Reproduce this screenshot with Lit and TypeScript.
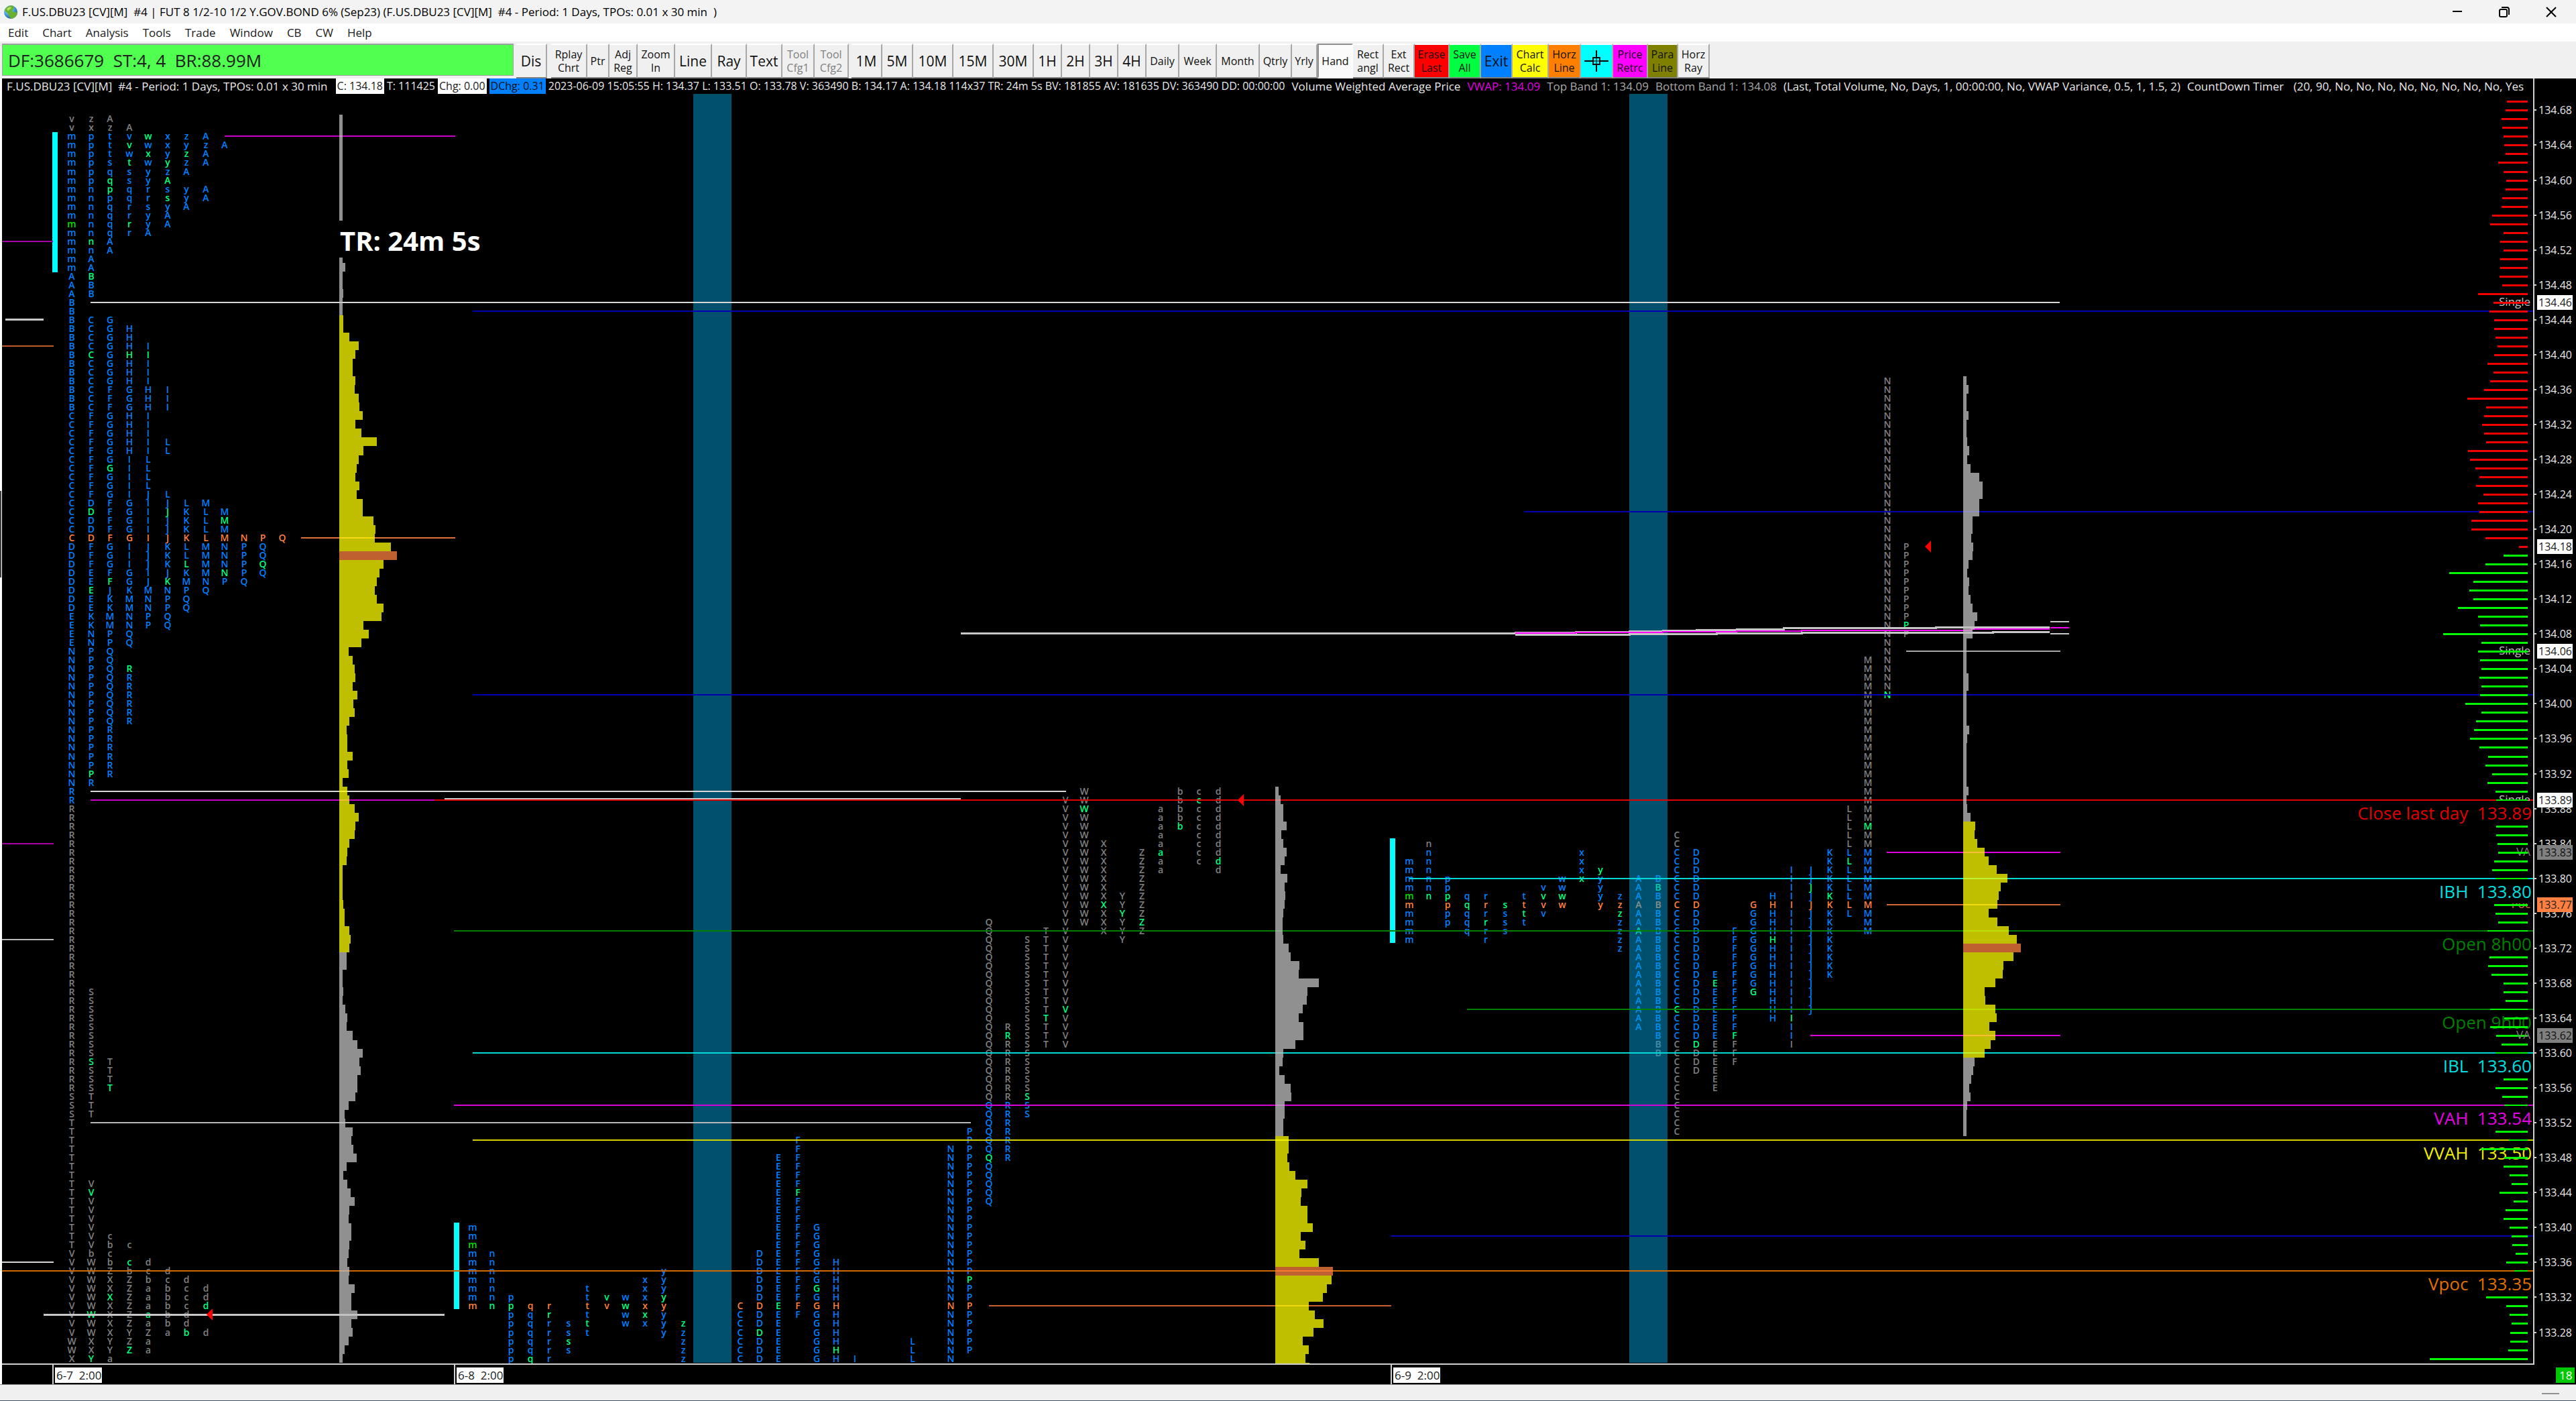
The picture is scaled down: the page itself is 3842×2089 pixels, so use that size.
import { LitElement, html, svg, css, nothing } from "lit";
import { customElement } from "lit/decorators.js";

/* ---------- price scale ---------- */
const TOP_PRICE = 134.68;
const TICK = 13.015;
/** Vertical centre of a tick row inside the plot; rows count down from 134.68. */
const rowY = (k: number) => Math.round(24.4 + TICK * k);
const AXIS_SHIFT = 23;

const COLORS = {
  grey: "#808080",
  blue: "#0080ff",
  green: "#00ff80",
  open: "#00e000",
  orange: "#ff8040",
};

/* ---------- letters ---------- */
/** Folded profile of 6-7. "*" marks a closing print, "!" the opening one. */
const FOLDED: string[] = [
  "vzA", "vxzA", "mptv*wxzA", "mpt*vwxyzA", "mptw*xy*zA", "mps*tw*yzA", "mpqsyzA", "mp*qsy*A",
  "mn*pqrsyA", "mnpqr*syA", "mnqrsyA", "mnqryA", "!mnq*ryA", "mnqrA", "m*nA", "mnA", "mA", "mA",
  "A*B", "AB", "AB", "B", "B", "BCG", "BCGH", "BCGH", "BCGHI", "B*CG*H*I", "BCGHI", "BCGHI", "BCGHI",
  "BCFGHI", "BCFGHI", "BCFGHI", "CFGHI", "CFGHI", "CFGHI", "CFGHIL", "CFGHIL", "CFGIL", "CF*GIL",
  "CFGIL", "CFGIL", "CFGIJL", "CDFGIJLM", "C*DFGI*JKLM", "CDFGIJKL*M", "CDFGIJKLM", "CDFGIJKLMNPQ",
  "DFGIJKLMNPQ", "DFGIJKLMNPQ", "DFGIJK*LMNP*Q", "DEFGIJKM*NPQ", "DE*FGJ*KMNPQ", "D*EJKMNPQ",
  "DEKMNPQ", "DEKMNPQ", "EKMNPQ", "EKMNPQ", "ENPQ", "ENPQ", "NPQ", "NPQ", "NPQ*R", "NPQR", "NPQR",
  "NPQR", "NPQR", "NPQR", "NPQR", "NPR", "NPR", "NPR", "NPR", "NPR", "N*PR", "NR", "R", "R",
  ...Array(21).fill("R"),
  ...Array(8).fill("RS"),
  "R*ST", "RST", "RST", "RS*T", "ST", "ST", "ST",
  ...Array(7).fill("T"),
  "TV", "T*V", "TV", "TV", "TV", "TV", "TVc", "TVbc", "Vbc", "VWb*cd", "VWZbcd", "VWXZbcd",
  "VWXZabcd", "VW*XZabcd", "VWXZabc*d", "V*WXZ*abd", "VWXZabd", "VWXYZa*bd", "WXYZa", "WXY*Za", "X*Ya",
];

const PERIODS = "mnpqrstvwxyzABCDEFGHIJKLMNPQRSTVWXYZabcd";
/** letter, first row, last row, row of the closing print */
type Period = [string, number, number, number?];

const DAY8: Period[] = [
  ["m", 128, 137], ["n", 131, 137, 137], ["p", 136, 143, 137], ["q", 137, 143, 143], ["r", 137, 143, 138],
  ["s", 139, 142, 141], ["t", 135, 140, 139], ["v", 136, 137, 136], ["w", 136, 139, 137],
  ["x", 134, 139, 138], ["y", 133, 140, 136], ["z", 139, 143, 139], ["C", 137, 143], ["D", 131, 143, 140],
  ["E", 120, 143, 137], ["F", 118, 138, 124], ["G", 128, 143, 135], ["H", 132, 143, 142], ["I", 143, 143],
  ["L", 141, 143], ["N", 119, 143], ["P", 117, 142, 134], ["Q", 93, 125, 120], ["R", 105, 120, 106],
  ["S", 95, 115, 113], ["T", 94, 107, 104], ["V", 79, 107, 103], ["W", 78, 93, 80], ["X", 84, 94, 91],
  ["Y", 90, 95, 92], ["Z", 85, 94, 93], ["a", 80, 87, 85], ["b", 78, 82, 82], ["c", 78, 86, 79],
  ["d", 78, 87, 86],
];
const DAY9: Period[] = [
  ["m", 86, 95], ["n", 84, 90, 90], ["p", 88, 93, 90], ["q", 90, 94, 91], ["r", 90, 95, 93],
  ["s", 91, 94, 91], ["t", 90, 93, 92], ["v", 89, 92, 90], ["w", 88, 91, 90], ["x", 85, 88, 88],
  ["y", 87, 91, 87], ["z", 90, 96, 92], ["A", 88, 105, 94], ["B", 88, 108, 89], ["C", 83, 117, 103],
  ["D", 85, 110, 107], ["E", 99, 112, 100], ["F", 94, 109, 106], ["G", 91, 101, 101], ["H", 90, 104, 95],
  ["I", 87, 107, 104], ["J", 87, 103, 89], ["K", 85, 99, 90], ["L", 80, 92, 86], ["M", 63, 94, 82],
  ["N", 31, 67, 67], ["P", 50, 60, 59],
];

interface Profile {
  x: number;
  poc: number;
  vah: number;
  val: number;
  openRow: number;
}
const P7: Profile = { x: 107, poc: 49, vah: 3, val: 79, openRow: 13 };
const P8: Profile = { x: 705, poc: 137, vah: 114, val: 200, openRow: 130 };
const P9: Profile = { x: 2102, poc: 91, vah: 85, val: 106, openRow: 90 };
const COL = 28.5;

/* ---------- volume at price ---------- */
interface Volume {
  x: number;
  from: number;
  vah: number;
  val: number;
  poc: number;
  units: number[];
}
const rep = (n: number, v: number): number[] => Array(n).fill(v);
const VOLUMES: Volume[] = [
  {
    x: 506, from: 1, vah: 24, val: 96, poc: 51,
    units: [
      ...rep(17, 3), 6, 3, 3, 4, 3, 3, 4, 4, 10, 19, 16, 13, 13, 16, 15, 19, 20, 23, 16, 22, 37, 24, 19, 17,
      16, 20, 17, 23, 23, 34, 36, 35, 51, 57, 44, 40, 37, 35, 37, 44, 42, 24, 29, 22, 9, 13, 15, 16, 13, 18,
      14, 15, 10, 7, 8, 8, 13, 8, 9, 3, 8, 10, 15, 19, 16, 15, 10, 8, 7, 3, 3, 3, 3, 4, 5, 5, 10, 11, 10, 7,
      7, 3, 3, 4, 3, 6, 8, 7, 13, 18, 23, 20, 21, 18, 18, 16, 9, 5, 6, 13, 12, 14, 17, 7, 4, 8, 11, 15, 10,
      9, 12, 12, 10, 9, 8, 10, 9, 15, 12, 12, 18, 12, 13, 9, 5, 3,
    ],
  },
  {
    x: 1902, from: 78, vah: 118, val: 200, poc: 133,
    units: [
      3, 5, 8, 8, 11, 6, 8, 11, 9, 5, 12, 9, 10, 9, 8, 7, 7, 8, 13, 15, 24, 23, 43, 32, 31, 27, 23, 28, 28,
      20, 8, 7, 4, 9, 15, 16, 9, 9, 8, 8, 13, 13, 12, 14, 20, 32, 26, 25, 32, 32, 37, 25, 30, 24, 43, 57,
      56, 51, 47, 33, 39, 48, 38, 27, 33, 30, 34,
    ],
  },
  {
    x: 2928, from: 31, vah: 82, val: 108, poc: 96,
    units: [
      3, 5, 3, 3, 5, 3, 3, 4, 6, 4, 7, 16, 19, 19, 16, 16, 9, 9, 8, 10, 9, 5, 4, 6, 5, 7, 9, 14, 11, 9, 3, 3,
      3, 3, 5, 5, 3, 3, 3, 3, 6, 4, 3, 3, 3, 3, 3, 5, 3, 4, 7, 12, 11, 14, 21, 25, 33, 44, 37, 35, 34, 25,
      34, 45, 53, 57, 50, 40, 39, 32, 21, 22, 32, 33, 26, 32, 27, 21, 11, 10, 8, 6, 7, 4, 3, 3, 3,
    ],
  },
];

/* ---------- market depth, one bar per tick from 134.69 ---------- */
const DEPTH: number[] = [
  31, 33, 39, 38, 36, 35, 33, 44, 36, 32, 33, 38, 39, 53, 56, 36, 41, 36, 41, 41, 42, 38, 74, 51, 57, 50,
  50, 48, 45, 50, 60, 51, 56, 65, 90, 62, 65, 68, 65, 62, 89, 86, 78, 72, 77, 66, 74, 72, 84, 84, 63, 13,
  36, 63, 117, 81, 87, 81, 104, 74, 71, 126, 69, 74, 71, 69, 72, 69, 71, 93, 69, 77, 80, 86, 72, 59, 63,
  53, 60, 48, 47, 0, 0, 47, 47, 45, 44, 50, 53, 48, 0, 0, 50, 48, 44, 60, 0, 0, 57, 59, 54, 36, 36, 33,
  56, 35, 56, 47, 39, 48, 0, 0, 36, 48, 38, 35, 0, 0, 48, 28, 70, 35, 36, 27, 24, 42, 21, 33, 36, 27, 24,
  23, 18, 32, 20, 0, 0, 62, 32, 27, 24, 26, 26, 29, 146,
];

/* ---------- horizontal lines ---------- */
/** row, start, end (null runs to the right edge), colour */
type Level = [number, number, number | null, string];

const PROFILE_LINES: Level[] = [
  [15, 0, 79, "#a800a8"], [3, 335, 679, "#c800c8"], [22, 135, 3072, "#d8d8d8"], [27, 0, 80, "#c05828"],
  [49, 449, 679, "#e07038"], [78, 135, 1590, "#d8d8d8"], [79, 135, 648, "#c800c8"], [84, 0, 80, "#a800a8"],
  [95, 0, 80, "#b8b8b8"], [132, 0, 80, "#d8d8d8"], [116, 135, 1448, "#b8b8b8"], [137, 1475, 2075, "#c86030"],
  [106, 2700, 3073, "#e000e0"], [85, 2814, 3073, "#e000e0"], [91, 2814, 3073, "#d06838"],
  [62, 2843, 3073, "#a8a8a8"],
];
const CHART_LINES: Level[] = [
  [23, 705, null, "#0000b0"], [46, 2273, null, "#0000b0"], [67, 705, null, "#0000b0"],
  [129, 2074, null, "#0000b0"], [79, 648, null, "#e00000"], [94, 677, null, "#008000"],
  [103, 2188, null, "#008000"], [88, 2102, null, "#00d8d8"], [108, 705, null, "#00d8d8"],
  [114, 677, null, "#d800d8"], [118, 705, null, "#d0d000"], [133, 0, null, "#d06800"],
];
const LABELS: [number, string, string][] = [
  [79, "Close last day\u00a0 133.89", "#e00000"], [88, "IBH\u00a0 133.80", "#00e0e0"], [94, "Open 8h00", "#008000"],
  [103, "Open 9h00", "#008000"], [108, "IBL\u00a0 133.60", "#00e0e0"], [114, "VAH\u00a0 133.54", "#e800e8"],
  [118, "VVAH\u00a0 133.50", "#f0f000"], [133, "Vpoc\u00a0 133.35", "#e07000"],
];
const STUDY_LABELS: [number, string, string][] = [
  [22, "Single", "#c0c0c0"], [62, "Single", "#c0c0c0"], [79, "Single", "#c0c0c0"], [85, "VA", "#808080"],
  [91, "Poc", "#e07038"],
];
const MARKS: [number, string, string][] = [
  [22, "#ffffff", "#202020"], [50, "#ffffff", "#202020"], [62, "#ffffff", "#202020"],
  [79, "#ffffff", "#202020"], [85, "#808080", "#101010"], [91, "#ff8040", "#202020"],
  [106, "#808080", "#101010"],
];

/* ---------- toolbar ---------- */
interface Tool {
  t: string[];
  w: number;
  big?: boolean;
  bg?: string;
  off?: boolean;
  on?: boolean;
  gap?: number;
  cross?: boolean;
}
const TOOLS: Tool[] = [
  { t: ["Dis"], w: 46, big: true, gap: 4 },
  { t: ["Rplay", "Chrt"], w: 54, gap: 6 }, { t: ["Ptr"], w: 33 }, { t: ["Adj", "Reg"], w: 42 },
  { t: ["Zoom", "In"], w: 56 }, { t: ["Line"], w: 55, big: true }, { t: ["Ray"], w: 52, big: true },
  { t: ["Text"], w: 53, big: true }, { t: ["Tool", "Cfg1"], w: 48, off: true },
  { t: ["Tool", "Cfg2"], w: 51, off: true },
  { t: ["1M"], w: 46, big: true, gap: 4 }, { t: ["5M"], w: 46, big: true }, { t: ["10M"], w: 60, big: true },
  { t: ["15M"], w: 60, big: true }, { t: ["30M"], w: 60, big: true }, { t: ["1H"], w: 42, big: true },
  { t: ["2H"], w: 42, big: true }, { t: ["3H"], w: 42, big: true }, { t: ["4H"], w: 42, big: true },
  { t: ["Daily"], w: 49 }, { t: ["Week"], w: 56 }, { t: ["Month"], w: 64 }, { t: ["Qtrly"], w: 48 },
  { t: ["Yrly"], w: 38 }, { t: ["Hand"], w: 53, on: true }, { t: ["Rect", "angl"], w: 46 },
  { t: ["Ext", "Rect"], w: 46 }, { t: ["Erase", "Last"], w: 52, bg: "#ff0000" },
  { t: ["Save", "All"], w: 47, bg: "#00ff40" }, { t: ["Exit"], w: 47, big: true, bg: "#0080ff" },
  { t: ["Chart", "Calc"], w: 54, bg: "#ffff00" }, { t: ["Horz", "Line"], w: 48, bg: "#ff8000" },
  { t: ["Crosshair"], w: 48, bg: "#00ffff", cross: true }, { t: ["Price", "Retrc"], w: 52, bg: "#ff00ff" },
  { t: ["Para", "Line"], w: 45, bg: "#808000" }, { t: ["Horz", "Ray"], w: 47 },
];
const MENU = ["Edit", "Chart", "Analysis", "Tools", "Trade", "Window", "CB", "CW", "Help"];
const DATES: [number, string][] = [[78, "6-7\u00a0 2:00"], [677, "6-8\u00a0 2:00"], [2074, "6-9\u00a0 2:00"]];

@customElement("title-strip")
class TitleStrip extends LitElement {
  static styles = css`
    :host { display: flex; align-items: center; height: 35px; background: #f3f3f3; padding-left: 5px;
      font: 17px "Open Sans", "Noto Sans", sans-serif; color: #000; }
    .globe { width: 22px; height: 24px; margin-right: 6px; }
    .name { flex: 1; margin: 0; font: inherit; white-space: pre; }
    .ctl { width: 70px; height: 34px; padding: 0; border: 0; background: none; display: grid; place-items: center; }
    .ctl svg { fill: none; stroke: #000; stroke-width: 2; }
    .ctl:last-child { margin-right: 2px; }
  `;
  render() {
    return html`
      <svg class="globe" viewBox="0 0 22 24">
        <defs>
          <radialGradient id="g" cx="35%" cy="30%" r="75%">
            <stop offset="0" stop-color="#e8f8ff" /><stop offset=".45" stop-color="#58b0e0" />
            <stop offset="1" stop-color="#1858a0" />
          </radialGradient>
        </defs>
        <circle cx="11" cy="12" r="10" fill="url(#g)" />
        <path d="M2 9C5 3 11 1 15 3C17 6 13 8 14 11C16 13 20 11 21 13C20 19 15 22 11 22C10 18 7 17 7 14C5 12 3 12 2 9Z" fill="#68b030" />
        <path d="M5 7C8 4 11 4 12 5C11 8 8 8 7 11Z" fill="#b8e060" />
      </svg>
      <h1 class="name">F.US.DBU23 [CV][M]  #4 | FUT 8 1/2-10 1/2 Y.GOV.BOND 6% (Sep23) (F.US.DBU23 [CV][M]  #4 - Period: 1 Days, TPOs: 0.01 x 30 min  )</h1>
      <button class="ctl" aria-label="Minimize"><svg width="16" height="16"><path d="M1 7H15" /></svg></button>
      <button class="ctl" aria-label="Restore"><svg width="16" height="16"><rect x="1" y="4" width="11" height="11" rx="2" /><path d="M4 1H12Q15 1 15 4V12" /></svg></button>
      <button class="ctl" aria-label="Close"><svg width="16" height="16"><path d="M1 1L15 15M15 1L1 15" /></svg></button>
    `;
  }
}

@customElement("tool-strip")
class ToolStrip extends LitElement {
  static styles = css`
    :host { display: block; font-family: "Open Sans", "Noto Sans", sans-serif; color: #202020; }
    .menu { display: flex; gap: 21px; height: 27px; padding: 0 12px; background: #fff; align-items: center; }
    .menu button { border: 0; padding: 0; background: none; font: 17px "Open Sans", sans-serif; color: #202020; }
    .bar { display: flex; height: 55px; background: #f0f0f0; padding: 3px 0 0 3px; box-sizing: border-box; }
    .state { box-sizing: border-box; width: 763px; height: 48px; line-height: 46px; padding-left: 8px; background: #50ff50;
      border: 1px solid #a0a0a0; border-top-width: 2px; font-size: 26px; white-space: pre; }
    .tool { box-sizing: border-box; height: 52px; padding: 0; border: 0; border-right: 2px solid #a8a8a8;
      border-top: 2px solid #fff; border-bottom: 2px solid #808080; background: #f0f0f0; font: 16px/20px "Open Sans", sans-serif; color: #101010;
      display: flex; flex-direction: column; align-items: center; justify-content: center; white-space: nowrap; }
    .big { font-size: 21px; line-height: 26px; }
    .tool:disabled { color: #808080; }
    .on { background: #fbfbfb; border-top-color: #909090; border-left: 2px solid #909090; border-right-color: #fff; border-bottom-color: #fff; }
    .on + .tool { border-left: 0; }
  `;
  render() {
    return html`
      <nav class="menu">${MENU.map((m) => html`<button>${m}</button>`)}</nav>
      <div class="bar">
        <output class="state">DF:3686679  ST:4, 4  BR:88.99M</output>
        ${TOOLS.map((t) => html`<button
          class="tool ${t.big ? "big" : ""} ${t.on ? "on" : ""}"
          ?disabled=${t.off}
          aria-label=${t.t.join(" ")}
          style="width:${t.w}px;${t.gap ? `margin-left:${t.gap}px;` : ""}${t.bg ? `background:${t.bg};` : ""}"
        >${t.cross
          ? html`<svg width="36" height="32" fill="none" stroke="#000" stroke-width="2"><path d="M0 16H36M18 0V32" /><rect x="13" y="11" width="10" height="10" fill="#00ffff" /><path d="M18 11V21M13 16H23" stroke-width="1" /></svg>`
          : t.t.map((s) => html`<span>${s}</span>`)}</button>`)}
      </div>
    `;
  }
}

@customElement("profile-chart")
class ProfileChart extends LitElement {
  static styles = css`
    :host { position: relative; display: grid; grid-template-columns: minmax(0, 1fr) 64px; grid-template-rows: minmax(0, 1fr) 29px;
      background: #000; border-bottom: 1px solid #909090; overflow: hidden; font-family: "Open Sans", "Noto Sans", sans-serif; color: #e8e8e8; }
    .edge { position: absolute; left: 0; top: 0; bottom: 0; width: 3px; background: #fff; }
    .notch { position: absolute; left: 0; top: 615px; width: 2px; height: 129px; background: #404040; }
    .plot { display: flex; flex-direction: column; min-width: 0; min-height: 0; border-bottom: 2px solid #d0d0d0; overflow: hidden; }
    .info { display: flex; height: 23px; line-height: 23px; padding-left: 10px; font-size: 17px; white-space: pre; overflow: hidden; }
    .info span { flex: none; margin-right: 4px; }
    .info .lead { margin-right: 12px; }
    .info .wide { margin-right: 10px; }
    .info .num { font-size: 16px; }
    .white { background: #fff; color: #202020; padding: 0 2px; }
    .azure { background: #0080ff; color: #101010; padding: 0 2px; }
    .vwap { color: #e000e0; }
    .dim { color: #a8a8a8; }
    .canvas { flex: 1; width: 100%; min-height: 0; display: block; }
    .nest { overflow: visible; }
    .axis { width: 100%; height: 100%; border-left: 2px solid #d0d0d0; box-sizing: border-box; display: block; }
    .axis text { font-size: 16px; fill: #e8e8e8; }
    .dates { grid-column: 1 / 3; width: 100%; height: 29px; display: block; }
    .dates text { font-size: 17px; fill: #202020; }
    .dates .count { fill: #fff; }
    .tpo { font-size: 14px; font-weight: 600; text-anchor: middle; }
    .label { font-size: 26px; text-anchor: end; }
    .study { font-size: 17px; text-anchor: end; }
    .timer { font-size: 40px; font-weight: 700; fill: #fff; }
  `;

  private letter(ch: string, x: number, k: number, fill: string) {
    return svg`<text x=${Math.round(x)} y=${rowY(k) + 5} fill=${fill}>${ch}</text>`;
  }

  private base(p: Profile, k: number) {
    if (k === p.poc) return COLORS.orange;
    return k >= p.vah && k <= p.val ? COLORS.blue : COLORS.grey;
  }

  private folded() {
    return FOLDED.map((row, i) => {
      const k = i + 1;
      const out: unknown[] = [];
      let col = 0;
      let fill = "";
      for (const ch of row) {
        if (ch === "*") fill = COLORS.green;
        else if (ch === "!") fill = COLORS.open;
        else {
          out.push(this.letter(ch, P7.x + COL * col, k, fill || this.base(P7, k)));
          col++;
          fill = "";
        }
      }
      return out;
    });
  }

  private split(p: Profile, periods: Period[]) {
    return periods.map(([ch, from, to, close]) => {
      const x = p.x + COL * PERIODS.indexOf(ch);
      const out: unknown[] = [];
      for (let k = from; k <= to; k++) {
        const fill = k === close ? COLORS.green : ch === "m" && k === p.openRow ? COLORS.open : this.base(p, k);
        out.push(this.letter(ch, x, k, fill));
      }
      return out;
    });
  }

  private volume(v: Volume) {
    return v.units.map((u, i) => {
      const k = v.from + i;
      const y = Math.round(17.9 + TICK * k);
      const h = Math.round(17.9 + TICK * (k + 1)) - y;
      const fill = k === v.poc ? "#ff8040" : k >= v.vah && k <= v.val ? "#ffff00" : "#c0c0c0";
      return svg`<rect x=${v.x} y=${y} width=${Math.round(u * 1.5)} height=${h} fill=${fill} />`;
    });
  }

  private level([k, x1, x2, color]: Level) {
    return svg`<line x1=${x1} x2=${x2 ?? "100%"} y1=${rowY(k)} y2=${rowY(k)} stroke=${color} stroke-width="2" />`;
  }

  private depth(over: boolean) {
    const top = [104, 105, 119, 120];
    return DEPTH.map((w, i) => {
      const k = i - 1;
      if (!w || top.includes(k) !== over) return nothing;
      return svg`<rect x=${-8 - w} y=${rowY(k) - 1} width=${w} height="3" fill=${k <= 50 ? "#f80000" : "#00f800"} />`;
    });
  }

  private arrow(x: number, k: number) {
    const y = rowY(k);
    return svg`<path d="M${x} ${y}L${x + 9} ${y - 9}V${y + 9}Z" fill="#ff0000" />`;
  }

  render() {
    return html`
      <section class="plot">
        <div class="info"><span class="lead">F.US.DBU23 [CV][M]  #4 - Period: 1 Days, TPOs: 0.01 x 30 min</span><span class="white num">C: 134.18</span><span class="num">T: 111425</span><span class="white num">Chg: 0.00</span><span class="azure num">DChg: 0.31</span><span class="num wide">2023-06-09 15:05:55 H: 134.37 L: 133.51 O: 133.78 V: 363490 B: 134.17 A: 134.18 114x37 TR: 24m 5s BV: 181855 AV: 181635 DV: 363490 DD: 00:00:00</span><span class="wide">Volume Weighted Average Price</span><span class="vwap wide">VWAP: 134.09</span><span class="dim wide">Top Band 1: 134.09</span><span class="dim wide">Bottom Band 1: 134.08</span><span class="wide">(Last, Total Volume, No, Days, 1, 00:00:00, No, VWAP Variance, 0.5, 1, 1.5, 2)</span><span class="wide">CountDown Timer</span><span> (20, 90, No, No, No, No, No, No, No, No, Yes</span></div>
        <svg class="canvas">
          <g shape-rendering="crispEdges">
            <rect x="78" y="57" width="8" height="209" fill="#00ffff" />
            <rect x="677" y="1683" width="8" height="129" fill="#00ffff" />
            <rect x="2073" y="1110" width="8" height="156" fill="#00ffff" />
          </g>
          <g class="tpo">${this.folded()}${this.split(P8, DAY8)}${this.split(P9, DAY9)}</g>
          <g shape-rendering="crispEdges" fill="#00a0dc" opacity="0.5">
            <rect x="1034" y="0" width="57" height="1892" /><rect x="2430" y="0" width="57" height="1892" />
          </g>
          <g shape-rendering="crispEdges">${PROFILE_LINES.map((l) => this.level(l))}</g>
          <g shape-rendering="crispEdges" fill="none" stroke="#c8c8c8" stroke-width="3">
            <path d="M8 336H65M65 1820H663M663 1051H1433" />
            <path d="M1433 804H2260V803H2350V802H2430V801H2480V800H2530V799H2590V798H2660V796H2887V795H3057" />
            <path d="M2260 806H2430V805H2560V804H2687V803H2972V802H3057" />
            <path d="M3058 787H3086M3058 805H3086" stroke-width="2" />
            <path d="M2260 804H2350V803H2480V802H2590V801H2687V800H2940V798H3057M3058 796H3086" stroke="#ff00ff" stroke-width="2" />
          </g>
          <g shape-rendering="crispEdges">${CHART_LINES.map((l) => this.level(l))}</g>
          <g shape-rendering="crispEdges" opacity="0.75">${VOLUMES.map((v) => this.volume(v))}</g>
          ${this.arrow(308, 138)}${this.arrow(1846, 79)}${this.arrow(2871, 50)}
          <rect x="504" y="189" width="216" height="55" fill="#000" />
          <text class="timer" x="507" y="234">TR: 24m 5s</text>
          <svg class="nest" x="100%">
            <g class="study">${STUDY_LABELS.map(([k, t, c]) => svg`<text x="-4" y=${rowY(k) + 5} fill=${c}>${t}</text>`)}</g>
            <g shape-rendering="crispEdges">${this.depth(false)}</g>
            <g class="label">${LABELS.map(([k, t, c]) => svg`<rect x="-90" y=${rowY(k) + 1} width="90" height=${k === 103 ? 32 : 36} fill="#000" /><text x="-2" y=${rowY(k) + 29} fill=${c}>${t}</text>`)}</g>
            <g shape-rendering="crispEdges">${this.depth(true)}</g>
            <text class="study" x="-4" y=${rowY(106) + 5} fill="#808080">VA</text>
          </svg>
        </svg>
      </section>
      <svg class="axis">
        ${Array.from({ length: 36 }, (_, i) => {
          const y = rowY(i * 4) + AXIS_SHIFT;
          return svg`<rect x="0" y=${y - 1} width="3" height="2" fill="#d0d0d0" /><text x="6" y=${y + 6}>${(TOP_PRICE - i * 0.04).toFixed(2)}</text>`;
        })}
        ${MARKS.map(([k, bg, fg]) => {
          const y = rowY(k) + AXIS_SHIFT;
          return svg`<rect x="4" y=${y - 11} width="53" height="22" fill=${bg} /><text x="6" y=${y + 6} style="fill:${fg}">${(TOP_PRICE - k / 100).toFixed(2)}</text>`;
        })}
      </svg>
      <svg class="dates">
        ${DATES.map(([x, t]) => svg`<rect x=${x} y="0" width="2" height="29" fill="#d0d0d0" /><rect x=${x + 4} y="4" width="70" height="23" fill="#fff" /><text x=${x + 6} y="22">${t}</text>`)}
        <svg class="nest" x="100%"><rect x="-30" y="4" width="28" height="23" fill="#00c800" /><text class="count" x="-25" y="22">18</text></svg>
      </svg>
      <span class="edge"></span><span class="notch"></span>
    `;
  }
}

@customElement("app-root")
class AppRoot extends LitElement {
  static styles = css`
    :host { display: flex; flex-direction: column; height: 100vh; background: #f0f0f0; }
    .grow { flex: 1; min-height: 0; }
    .foot { height: 24px; box-sizing: border-box; border-bottom: 1px solid #405060; display: flex; justify-content: flex-end; padding: 12px 25px 0 0; }
    .grip { width: 26px; height: 2px; background: #909090; }
  `;
  render() {
    return html`
      <title-strip></title-strip>
      <tool-strip></tool-strip>
      <profile-chart class="grow"></profile-chart>
      <footer class="foot"><span class="grip"></span></footer>
    `;
  }
}
